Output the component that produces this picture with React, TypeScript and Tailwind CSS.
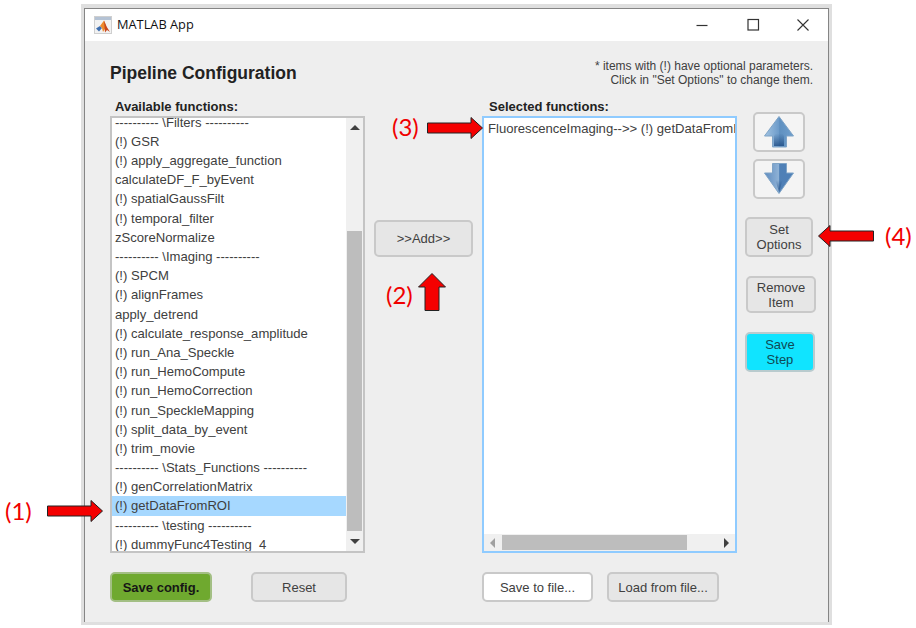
import { ReactNode } from 'react';

type Row = { label: string; selected?: boolean };

const rows: Row[] = [
  { label: '---------- \\Filters ----------' },
  { label: '(!) GSR' },
  { label: '(!) apply_aggregate_function' },
  { label: 'calculateDF_F_byEvent' },
  { label: '(!) spatialGaussFilt' },
  { label: '(!) temporal_filter' },
  { label: 'zScoreNormalize' },
  { label: '---------- \\Imaging ----------' },
  { label: '(!) SPCM' },
  { label: '(!) alignFrames' },
  { label: 'apply_detrend' },
  { label: '(!) calculate_response_amplitude' },
  { label: '(!) run_Ana_Speckle' },
  { label: '(!) run_HemoCompute' },
  { label: '(!) run_HemoCorrection' },
  { label: '(!) run_SpeckleMapping' },
  { label: '(!) split_data_by_event' },
  { label: '(!) trim_movie' },
  { label: '---------- \\Stats_Functions ----------' },
  { label: '(!) genCorrelationMatrix' },
  { label: '(!) getDataFromROI', selected: true },
  { label: '---------- \\testing ----------' },
  { label: '(!) dummyFunc4Testing_4' },
];

// border and text colours come in through className
function Btn({ className, children }: { className: string; children: ReactNode }) {
  return (
    <button className={`flex items-center justify-center rounded-[5px] border-2 text-[13px] leading-[15px] ${className}`}>
      {children}
    </button>
  );
}

function BlockArrow({ className, up }: { className: string; up?: boolean }) {
  // annotation arrow, drawn pointing right unless up is set
  return (
    <svg className={`absolute ${className}`} viewBox={up ? '0 0 28 38' : '0 0 56 22'}>
      <path
        d={up ? 'M14 0.5 L27.5 14 L21 14 L21 37.5 L7 37.5 L7 14 L0.5 14 Z' : 'M0.5 6 L44 6 L44 0.5 L55.5 11 L44 21.5 L44 16 L0.5 16 Z'}
        fill="#f40000"
        stroke="#222"
        strokeWidth="1"
      />
    </svg>
  );
}

function Callout({ className, children }: { className: string; children: ReactNode }) {
  return <span className={`absolute font-['Lato',sans-serif] text-[24px] leading-[26px] text-[#f00000] ${className}`}>{children}</span>;
}

function MoveIcon({ down }: { down?: boolean }) {
  const id = down ? 'moveDown' : 'moveUp';
  const d = down
    ? 'M8.5 0.5 H22.5 V10 H29.5 L15 30.5 L0.5 10 H8.5 Z'
    : 'M15 0.5 L29.5 20 H22.5 V31 H8.5 V20 H0.5 Z';
  return (
    <svg width="30" height="32" viewBox="0 0 30 32">
      <defs>
        <linearGradient id={id} x1="0" y1="0" x2="1" y2="0">
          <stop offset="0" stopColor={down ? '#5f8cc0' : '#a3c4e2'} />
          <stop offset="0.5" stopColor={down ? '#8fb2d6' : '#6c9bca'} />
          <stop offset="0.52" stopColor={down ? '#4f80b6' : '#5f90c0'} />
          <stop offset="1" stopColor={down ? '#4e80b8' : '#6f9fcd'} />
        </linearGradient>
        <linearGradient id={`${id}Shade`} x1="0" y1="0" x2="0" y2="1">
          <stop offset="0.3" stopColor="#123f78" stopOpacity="0" />
          <stop offset="1" stopColor="#123f78" stopOpacity="0.7" />
        </linearGradient>
      </defs>
      <path d={d} fill={`url(#${id})`} stroke="#7ea3c6" strokeWidth="1" />
      <path d={down ? 'M10 12 H20 L15 29 Z' : 'M15 12 L20 20 V30 H10 V20 Z'} fill={`url(#${id}Shade)`} />
    </svg>
  );
}

function ScrollArrow({ dir, dark }: { dir: 'up' | 'down' | 'left' | 'right'; dark?: boolean }) {
  const points = { up: '0,7 5,2 10,7', down: '0,3 5,8 10,3', left: '7,0 2,5 7,10', right: '3,0 8,5 3,10' };
  return (
    <svg width="10" height="10" viewBox="0 0 10 10">
      <polygon points={points[dir]} fill={dark ? '#404040' : '#a0a0a0'} />
    </svg>
  );
}

function MatlabLogo() {
  return (
    <div className="flex h-[18px] w-[18px] flex-col border border-[#cfcfcf] bg-[#f2f2f2]">
      <div className="h-[3px] bg-[#b4c2d4]" />
      <svg width="16" height="13" viewBox="0 0 16 13">
        <path d="M1 8.5 L5 6 L7 8 L4 11.5 Z" fill="#3f6fb0" />
        <path d="M5 6 L9 0.5 L11.5 6.5 L8 12 L7 8 Z" fill="#ee8a2c" />
        <path d="M9 0.5 L11.5 6.5 L15 12 L12 10 L10 12.5 Z" fill="#c8481c" />
      </svg>
    </div>
  );
}

export default function App() {
  return (
    <div className="relative h-[628px] w-[916px] overflow-hidden bg-white font-['Liberation_Sans',Arial,sans-serif]">
      <div className="ml-[81px] mt-[4px] h-[621px] w-[751px] bg-[#dfdfdf] px-[3px] pb-[3px] pt-[4px]">
        <div className="flex h-full flex-col border-x border-t border-[#858585] bg-[#eeeeee]">
          {/* title bar */}
          <div className="flex h-[32px] items-center bg-white pl-[9px]">
            <MatlabLogo />
            <span className="ml-[5px] font-['Open_Sans',sans-serif] text-[12.8px] text-[#111]">MATLAB App</span>
            <div className="ml-auto flex items-center">
              <svg width="14" height="14" viewBox="0 0 14 14" className="mr-[37px]">
                <path d="M1.5 7.5 H12.5" stroke="#333" strokeWidth="1.2" />
              </svg>
              <svg width="14" height="14" viewBox="0 0 14 14" className="mr-[36px]">
                <rect x="2" y="1.5" width="10.5" height="10.5" fill="none" stroke="#333" strokeWidth="1.2" />
              </svg>
              <svg width="14" height="14" viewBox="0 0 14 14" className="mr-[18px]">
                <path d="M1.5 1.5 L12.5 12.5 M12.5 1.5 L1.5 12.5" stroke="#333" strokeWidth="1.1" />
              </svg>
            </div>
          </div>

          {/* heading */}
          <div className="flex h-[58px] items-start justify-between pl-[25px] pr-[15px]">
            <h1 className="mt-[22px] text-[17.5px] font-bold leading-[20px] text-[#222]">Pipeline Configuration</h1>
            <p className="mt-[18px] text-right text-[12px] leading-[14px] text-[#404040]">
              * items with (!) have optional parameters.
              <br />
              Click in "Set Options" to change them.
            </p>
          </div>

          <div className="flex pl-[25px]">
            {/* available functions */}
            <div className="w-[255px]">
              <div className="mb-[2px] pl-[5px] text-[13px] font-bold leading-[15px] text-[#222]">Available functions:</div>
              <div className="flex h-[437px] border-2 border-[#c4c4c4] bg-white">
                <div className="flex-1 overflow-hidden">
                  <div className="-mt-[5.3px]">
                    {rows.map((row) => (
                      <div
                        key={row.label}
                        className={`h-[19.2px] whitespace-nowrap pl-[3px] text-[13.1px] leading-[19.2px] text-[#404040] ${row.selected ? 'bg-[#a6d8ff]' : ''}`}
                      >
                        {row.label}
                      </div>
                    ))}
                  </div>
                </div>
                <div className="flex w-[17px] flex-col items-center bg-[#f0f0f0]">
                  <div className="flex h-[20px] items-center"><ScrollArrow dir="up" dark /></div>
                  <div className="mt-[93px] h-[300px] w-[15px] bg-[#bdbdbd]" />
                  <div className="flex h-[20px] items-center"><ScrollArrow dir="down" dark /></div>
                </div>
              </div>
              <div className="mt-[19px] flex">
                <Btn className="h-[30px] w-[102px] border-[#a3bf84] bg-[#6fa92f] font-bold text-[#161616]">Save config.</Btn>
                <Btn className="ml-[39px] h-[30px] w-[96px] border-[#c9c9c9] bg-[#e6e6e6] text-[#404040]">Reset</Btn>
              </div>
            </div>

            {/* add button */}
            <div className="w-[117px] pl-[9px] pt-[121px]">
              <Btn className="h-[37px] w-[99px] border-[#c9c9c9] bg-[#e6e6e6] text-[#404040]">&gt;&gt;Add&gt;&gt;</Btn>
            </div>

            {/* selected functions */}
            <div className="w-[255px]">
              <div className="mb-[2px] pl-[7px] text-[13px] font-bold leading-[15px] text-[#222]">Selected functions:</div>
              <div className="flex h-[437px] flex-col border-2 border-[#8fcbff] bg-white">
                <div className="flex-1 overflow-hidden whitespace-nowrap pl-[4px] pt-[1px] text-[13.1px] leading-[19px] text-[#404040]">
                  FluorescenceImaging--&gt;&gt; (!) getDataFromROI
                </div>
                <div className="flex h-[17px] items-center bg-[#f0f0f0]">
                  <div className="flex w-[18px] justify-center"><ScrollArrow dir="left" /></div>
                  <div className="h-[15px] w-[185px] bg-[#bdbdbd]" />
                  <div className="ml-auto flex w-[18px] justify-center"><ScrollArrow dir="right" dark /></div>
                </div>
              </div>
              <div className="mt-[19px] flex">
                <Btn className="h-[30px] w-[111px] border-[#c9c9c9] bg-white text-[#404040]">Save to file...</Btn>
                <Btn className="ml-[14px] h-[30px] w-[112px] border-[#c9c9c9] bg-[#e6e6e6] text-[#404040]">Load from file...</Btn>
              </div>
            </div>

            {/* move and step buttons */}
            <div className="flex flex-col items-start pt-[13px]">
              <Btn className="ml-[16px] h-[40px] w-[52px] border-[#c9c9c9] bg-[#f4f4f4]"><MoveIcon /></Btn>
              <Btn className="ml-[16px] mt-[7px] h-[40px] w-[52px] border-[#c9c9c9] bg-[#f4f4f4]"><MoveIcon down /></Btn>
              <Btn className="ml-[8px] mt-[18px] h-[40px] w-[68px] border-[#c9c9c9] bg-[#e6e6e6] text-[#404040]">Set<br />Options</Btn>
              <Btn className="ml-[9px] mt-[19px] h-[37px] w-[70px] border-[#c9c9c9] bg-[#e6e6e6] text-[#404040]">Remove<br />Item</Btn>
              <Btn className="ml-[8px] mt-[19px] h-[40px] w-[70px] border-[#b9cbce] bg-[#10e4ff] text-[#0f4a55]">Save<br />Step</Btn>
            </div>
          </div>
        </div>
      </div>

      {/* numbered annotations on top of the window */}
      <Callout className="left-[5px] top-[498px]">(1)</Callout>
      <BlockArrow className="left-[47px] top-[500px] h-[22px] w-[56px]" />
      <Callout className="left-[386px] top-[282px]">(2)</Callout>
      <BlockArrow up className="left-[418px] top-[273px] h-[38px] w-[28px]" />
      <Callout className="left-[392px] top-[114px]">(3)</Callout>
      <BlockArrow className="left-[427px] top-[117px] h-[22px] w-[56px]" />
      <Callout className="left-[885px] top-[223px]">(4)</Callout>
      <BlockArrow className="left-[818px] top-[225px] h-[22px] w-[56px] rotate-180" />
    </div>
  );
}
